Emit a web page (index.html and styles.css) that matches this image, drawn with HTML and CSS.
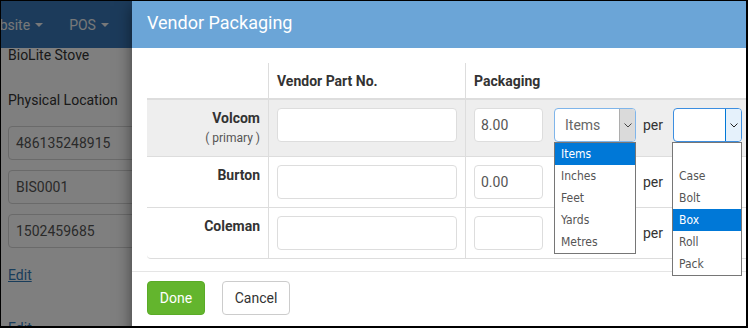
FILE: index.html
```html
<!DOCTYPE html>
<html lang="en">
<head>
<meta charset="utf-8">
<title>Vendor Packaging</title>
<link rel="stylesheet" href="styles.css">
</head>
<body>
<div class="frame">
  <div class="app">
    <nav class="navbar">
      <span class="nav-item first">Website<span class="caret"></span></span>
      <span class="nav-item">POS<span class="caret"></span></span>
    </nav>
    <div class="content">
      <div class="product-name">BioLite Stove</div>
      <div class="field-label">Physical Location</div>
      <div class="fake-input">486135248915</div>
      <div class="fake-input">BIS0001</div>
      <div class="fake-input">1502459685</div>
      <a class="edit-link">Edit</a>
      <a class="edit-link second">Edit</a>
    </div>
  </div>
  <div class="backdrop"></div>
  <div class="modal">
    <div class="modal-header"><h4 class="modal-title">Vendor Packaging</h4></div>
    <div class="modal-body">
      <table class="pack-table">
        <thead>
          <tr>
            <th class="col-vendor"></th>
            <th class="col-part">Vendor Part No.</th>
            <th class="col-pack">Packaging</th>
          </tr>
        </thead>
        <tbody>
          <tr class="primary-row">
            <td class="vendor"><strong>Volcom</strong><span class="primary-note">( primary )</span></td>
            <td><input class="text-input" type="text" value=""></td>
            <td>
              <div class="pack-controls">
                <input class="text-input qty" type="text" value="8.00">
                <div class="select uom hover">
                  <span class="select-value">Items</span>
                  <span class="select-arrow"><svg width="8" height="5" viewBox="0 0 8 5"><polyline points="0.5,0.5 4,4 7.5,0.5" fill="none" stroke="#444" stroke-width="1"/></svg></span>
                  <ul class="select-list">
                    <li class="active">Items</li>
                    <li>Inches</li>
                    <li>Feet</li>
                    <li>Yards</li>
                    <li>Metres</li>
                  </ul>
                </div>
                <span class="per">per</span>
                <div class="select unit open">
                  <span class="select-value"></span>
                  <span class="select-arrow"><svg width="8" height="5" viewBox="0 0 8 5"><polyline points="0.5,0.5 4,4 7.5,0.5" fill="none" stroke="#222" stroke-width="1"/></svg></span>
                  <ul class="select-list">
                    <li>&nbsp;</li>
                    <li>Case</li>
                    <li>Bolt</li>
                    <li class="active">Box</li>
                    <li>Roll</li>
                    <li>Pack</li>
                  </ul>
                </div>
              </div>
            </td>
          </tr>
          <tr>
            <td class="vendor"><strong>Burton</strong></td>
            <td><input class="text-input" type="text" value=""></td>
            <td>
              <div class="pack-controls">
                <input class="text-input qty" type="text" value="0.00">
                <div class="select uom">
                  <span class="select-value"></span>
                  <span class="select-arrow"></span>
                </div>
                <span class="per">per</span>
                <div class="select unit">
                  <span class="select-value"></span>
                  <span class="select-arrow"></span>
                </div>
              </div>
            </td>
          </tr>
          <tr>
            <td class="vendor"><strong>Coleman</strong></td>
            <td><input class="text-input" type="text" value=""></td>
            <td>
              <div class="pack-controls">
                <input class="text-input qty" type="text" value="">
                <div class="select uom">
                  <span class="select-value"></span>
                  <span class="select-arrow"></span>
                </div>
                <span class="per">per</span>
                <div class="select unit">
                  <span class="select-value"></span>
                  <span class="select-arrow"></span>
                </div>
              </div>
            </td>
          </tr>
        </tbody>
      </table>
    </div>
    <div class="modal-footer">
      <button class="btn btn-done" type="button">Done</button>
      <button class="btn btn-cancel" type="button">Cancel</button>
    </div>
  </div>
</div>
</body>
</html>
```
FILE: styles.css
```css
* { box-sizing: border-box; }

body {
  margin: 0;
  font-family: Roboto, "Liberation Sans", Arial, sans-serif;
  font-size: 14px;
  line-height: 20px;
  color: #333;
}

.frame {
  position: relative;
  width: 748px;
  height: 328px;
  border-style: solid;
  border-color: #000;
  border-width: 1px 2px 2px 1px;
  overflow: hidden;
  background: #fff;
}

/* background page */
.app { height: 100%; }

.navbar {
  height: 47px;
  background: #3877b6;
  display: flex;
  align-items: center;
  color: #eef0f2;
}

.nav-item {
  display: flex;
  align-items: center;
  margin-right: 26px;
}

.nav-item.first { margin-left: -21px; }

.caret {
  display: inline-block;
  margin-left: 5px;
  margin-top: 1px;
  border-top: 4px solid currentColor;
  border-left: 4px solid transparent;
  border-right: 4px solid transparent;
}

.content { padding: 0 7px; }

.product-name { line-height: 14px; }

.field-label { margin-top: 28px; }

.fake-input {
  width: 320px;
  height: 34px;
  margin-top: 10px;
  padding: 0 7px;
  line-height: 32px;
  border: 1px solid #d4d4d4;
  border-radius: 4px;
  color: #555;
}

.field-label + .fake-input { margin-top: 16px; }

.edit-link {
  display: block;
  width: max-content;
  margin-top: 17px;
  color: #337ab7;
  text-decoration: underline;
}

.edit-link.second { margin-top: 33px; }

.backdrop {
  position: absolute;
  inset: 0;
  background: rgba(0, 0, 0, 0.5);
}

/* modal */
.modal {
  position: absolute;
  top: 0;
  left: 131px;
  width: 640px;
  height: 345px;
  background: #fff;
  box-shadow: 0 5px 15px rgba(0, 0, 0, 0.5);
}

.modal-header {
  height: 47px;
  padding: 11px 15px 0;
  background: #6ba5d7;
}

.modal-title {
  margin: 0;
  font-size: 18px;
  line-height: 22px;
  font-weight: 400;
  color: #fff;
}

.modal-body { padding: 15px 15px 12px; }

.pack-table {
  width: 610px;
  border-collapse: separate;
  border-spacing: 0;
  table-layout: fixed;
}

.pack-table th {
  padding: 8px 8px 7px;
  text-align: left;
  font-weight: 700;
  color: #333;
  border-bottom: 2px solid #ddd;
  vertical-align: bottom;
}

.pack-table .col-vendor { width: 121px; }
.pack-table .col-part { width: 197px; }

.pack-table th + th,
.pack-table td + td { border-left: 1px solid #ddd; }

.pack-table td {
  padding: 8px;
  vertical-align: top;
  border-bottom: 1px solid #ddd;
}

.pack-table tbody tr:last-child td:first-child { border-bottom-left-radius: 4px; }

.primary-row td { background: #eee; }

.vendor { text-align: right; }

.vendor strong { display: block; font-weight: 700; color: #333; }

.primary-note {
  display: block;
  font-size: 12px;
  color: #555;
}

.text-input {
  display: block;
  width: 100%;
  height: 34px;
  margin: 0;
  padding: 6px;
  font: inherit;
  color: #555;
  background: #fff;
  border: 1px solid #ddd;
  border-radius: 4px;
  outline: none;
}

.pack-controls {
  display: flex;
  align-items: center;
}

.text-input.qty { width: 69px; flex: none; }

.select {
  position: relative;
  display: flex;
  flex: none;
  height: 34px;
  border: 1px solid #ddd;
  border-radius: 4px;
  background: #fff;
  color: #666;
}

.select.uom { width: 82px; margin-left: 11px; }
.select.unit { width: 69px; margin-left: 10px; }

.select-value {
  flex: 1;
  padding-left: 10px;
  line-height: 32px;
}

.select-arrow {
  width: 16px;
  display: flex;
  align-items: center;
  justify-content: center;
  border-left: 1px solid #ddd;
  border-radius: 0 3px 3px 0;
}

.select.hover { border-color: #7fb5ea; }
.select.hover .select-arrow { background: #dadada; border-left-color: #adadad; }

.select.open { border-color: #3c8ee0; }
.select.open .select-arrow { background: #e5f1fb; border-left-color: #0078d7; }

.per { margin-left: 7px; color: #333; }

.select-list {
  position: absolute;
  top: calc(100% + 1px);
  left: -1px;
  right: -1px;
  margin: 0;
  padding: 0;
  list-style: none;
  background: #fff;
  border: 1px solid #767676;
  font-family: "DejaVu Sans Condensed", "DejaVu Sans", sans-serif;
  font-size: 12px;
  color: #555;
  z-index: 5;
}

.select.unit .select-list { left: -2px; }

.select-list li {
  height: 22px;
  line-height: 22px;
  padding-left: 6px;
  white-space: nowrap;
}

.select-list li.active { background: #0078d7; color: #fff; }

.modal-footer {
  display: flex;
  gap: 17px;
  padding: 9px 15px 15px;
  border-top: 1px solid #e5e5e5;
}

.btn {
  height: 34px;
  padding: 0;
  font: inherit;
  border-radius: 4px;
  border: 1px solid transparent;
  cursor: pointer;
}

.btn-done {
  width: 58px;
  background: #63b52d;
  border-color: #5aab27;
  color: #fff;
}

.btn-cancel {
  width: 68px;
  background: #fff;
  border-color: #ccc;
  color: #333;
}
```
